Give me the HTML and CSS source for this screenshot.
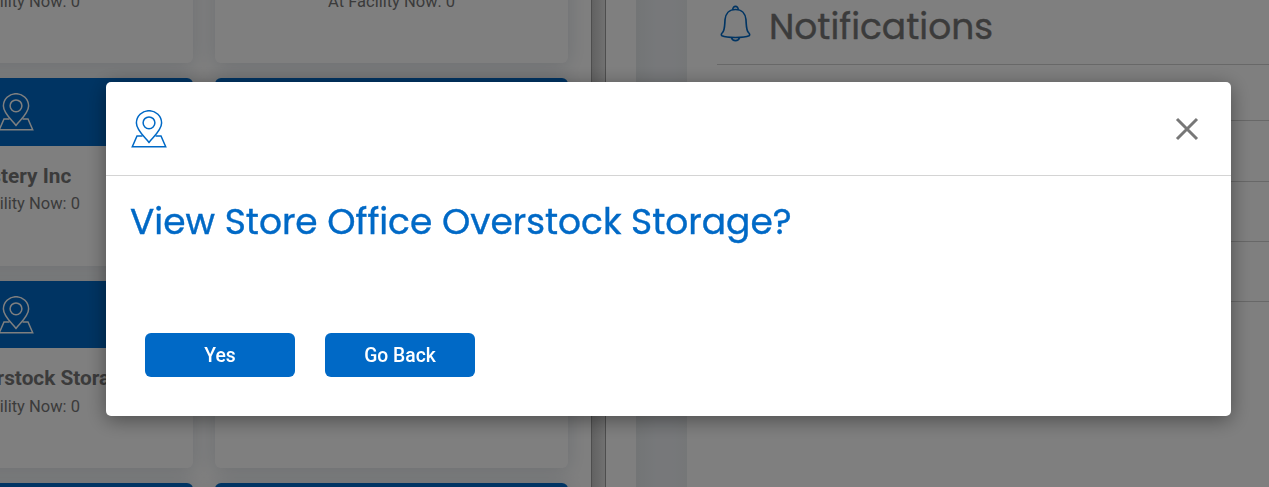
FILE: index.html
```html
<!DOCTYPE html>
<html lang="en">
<head>
  <meta charset="UTF-8">
  <meta name="viewport" content="width=device-width, initial-scale=1">
  <title>Facilities</title>
  <link rel="stylesheet" href="styles.css">
</head>
<body>
  <!-- Shared icons -->
  <svg class="sprite">
    <symbol id="icon-pin" viewBox="0 0 36 38">
      <path d="M18 32.4C13 26.3 5.4 20.2 5.4 13.1a12.6 12.4 0 0 1 25.2 0C30.6 20.2 23 26.3 18 32.4z"/>
      <circle cx="18" cy="12.8" r="5.9"/>
      <path d="M11.5 26H6L1.3 36.8h33.4L30 26H24.5"/>
    </symbol>
  </svg>

  <div class="page">
    <div class="locations">
      <div class="card-grid">
        <div class="card">
          <div class="card-header"><svg class="pin"><use href="#icon-pin"/></svg></div>
          <h3>Warehouse</h3>
          <p>At Facility Now: 0</p>
        </div>
        <div class="card">
          <div class="card-header"><svg class="pin"><use href="#icon-pin"/></svg></div>
          <h3>Main Office</h3>
          <p>At Facility Now: 0</p>
        </div>
        <div class="card">
          <div class="card-header"><svg class="pin"><use href="#icon-pin"/></svg></div>
          <h3>Mystery Inc</h3>
          <p>At Facility Now: 0</p>
        </div>
        <div class="card">
          <div class="card-header"></div>
        </div>
        <div class="card">
          <div class="card-header"><svg class="pin"><use href="#icon-pin"/></svg></div>
          <h3>Office Overstock Storage</h3>
          <p>At Facility Now: 0</p>
        </div>
        <div class="card">
          <div class="card-header"></div>
        </div>
        <div class="card"><div class="card-header"></div></div>
        <div class="card"><div class="card-header"></div></div>
      </div>
    </div>
    <div class="scrollbar"></div>
    <div class="panel-edge"></div>
    <div class="gutter"></div>
    <div class="notifications">
      <div class="notifications-title">
        <svg class="bell" viewBox="0 0 32 38">
          <path d="M16 4.5c-6.5 0-10.300 4.500-10.800 10.500-.5 6.500-.2 11-2.600 13.300C1.200 29.700 1 31 2 31.700c5 2.300 23 2.300 28 0 1-.7.8-2-.6-3.400-2.400-2.300-2.100-6.800-2.600-13.300C26.300 9 22.500 4.500 16 4.500z"/>
          <path d="M13.200 4.800c-.3-4.700 5.900-4.700 5.600 0M12 33.500c.8 4.200 7.200 4.200 8 0"/>
        </svg>
        <h2>Notifications</h2>
      </div>
      <ul>
        <li></li>
        <li></li>
        <li></li>
        <li></li>
      </ul>
    </div>
  </div>

  <div class="overlay">
    <div class="modal">
      <div class="modal-header">
        <svg class="pin"><use href="#icon-pin"/></svg>
        <button class="close" aria-label="Close">
          <svg viewBox="0 0 24 24"><path d="M2 2l20 20M22 2L2 22"/></svg>
        </button>
      </div>
      <div class="modal-body">
        <h1>View Store Office Overstock Storage?</h1>
        <div class="modal-buttons">
          <button>Yes</button>
          <button>Go Back</button>
        </div>
      </div>
    </div>
  </div>
</body>
</html>
```
FILE: styles.css
```css
* {
  box-sizing: border-box;
}
body {
  margin: 0;
  height: 100vh;
  overflow: hidden;
  font-family: Roboto, sans-serif;
  color: #777;
}
h1, h2, h3, p, ul {
  margin: 0;
  padding: 0;
}
.sprite {
  position: absolute;
  width: 0;
  height: 0;
}
svg {
  display: block;
  fill: none;
}
.page {
  display: flex;
  height: 100vh;
}
.locations {
  width: 591px;
  height: 100%;
  flex: none;
  overflow: hidden;
}
.card-grid {
  display: grid;
  grid-template-columns: 353px 353px;
  grid-auto-rows: 187.5px;
  gap: 15px 22px;
  margin: -124.5px 0 0 -160px;
}
.card {
  background: #fff;
  border-radius: 6px;
  box-shadow: 0 2px 20px rgba(20, 50, 80, 0.16);
  text-align: center;
}
.card-header {
  display: flex;
  align-items: center;
  justify-content: center;
  height: 67.5px;
  padding: 1px 1px 0 0;
  background: #0069c6;
  border-radius: 6px 6px 0 0;
}
.pin {
  width: 36px;
  height: 38px;
  stroke: #fff;
  stroke-width: 1.5;
}
.card h3 {
  margin-top: 18px;
  font-size: 20.8px;
  line-height: 24px;
  white-space: nowrap;
}
.card p {
  margin-top: 6.5px;
  font-size: 16.5px;
  line-height: 19px;
}
.scrollbar {
  flex: none;
  width: 15px;
  border: solid #9c9c9c;
  border-width: 0 1px;
  background: linear-gradient(90deg, #c4c4c4, #e2e2e2);
}
.panel-edge {
  flex: none;
  width: 30px;
}
.gutter {
  flex: none;
  width: 51px;
  background: linear-gradient(90deg, #e6eaec, #eef1f5 40%, #eef1f5 70%, #ebeef0);
}
.notifications {
  flex: 1;
  padding-left: 30px;
}
.notifications-title {
  display: flex;
  align-items: flex-start;
  gap: 17px;
  height: 65px;
  padding: 5px 0 0 3px;
  border-bottom: 1px solid #d0d0d0;
}
.bell {
  width: 31px;
  height: 37px;
  margin-right: 1px;
  stroke: #0069c6;
  stroke-width: 1.7;
}
h1, h2 {
  font-family: Poppins, Inter, sans-serif;
  font-weight: 400;
  white-space: nowrap;
  -webkit-text-stroke: 0.4px;
}
h2 {
  font-size: 36px;
  line-height: 44px;
}
.notifications ul {
  padding-top: 55.4px;
  list-style: none;
}
.notifications li {
  height: 60.2px;
  border-top: 1px solid #d0d0d0;
}
.overlay {
  position: fixed;
  inset: 0;
  padding: 82px 38px 0 106px;
  background: rgba(0, 0, 0, 0.5);
}
.modal {
  height: 334px;
  background: #fff;
  border-radius: 5px;
  box-shadow: 0 4px 20px rgba(0, 0, 0, 0.4);
}
.modal-header {
  display: flex;
  align-items: center;
  justify-content: space-between;
  height: 94px;
  padding: 0 32px 0 25px;
  border-bottom: 1px solid #d4d4d4;
}
.modal-header .pin {
  stroke: #0069c6;
}
.close {
  padding: 0;
  border: none;
  background: none;
  cursor: pointer;
}
.close svg {
  width: 24px;
  height: 24px;
  stroke: #777;
  stroke-width: 3;
}
.modal-body {
  padding: 23px 24px 0;
}
h1 {
  font-size: 36px;
  line-height: 46px;
  color: #0069c6;
}
.modal-buttons {
  display: flex;
  gap: 30px;
  padding: 88px 15px 0;
}
.modal-buttons button {
  width: 150px;
  height: 44px;
  padding: 1px 0 0;
  border: none;
  border-radius: 6px;
  background: #0069c6;
  color: #fff;
  font-family: Roboto, sans-serif;
  font-size: 19.3px;
  font-weight: 500;
  cursor: pointer;
}
```
